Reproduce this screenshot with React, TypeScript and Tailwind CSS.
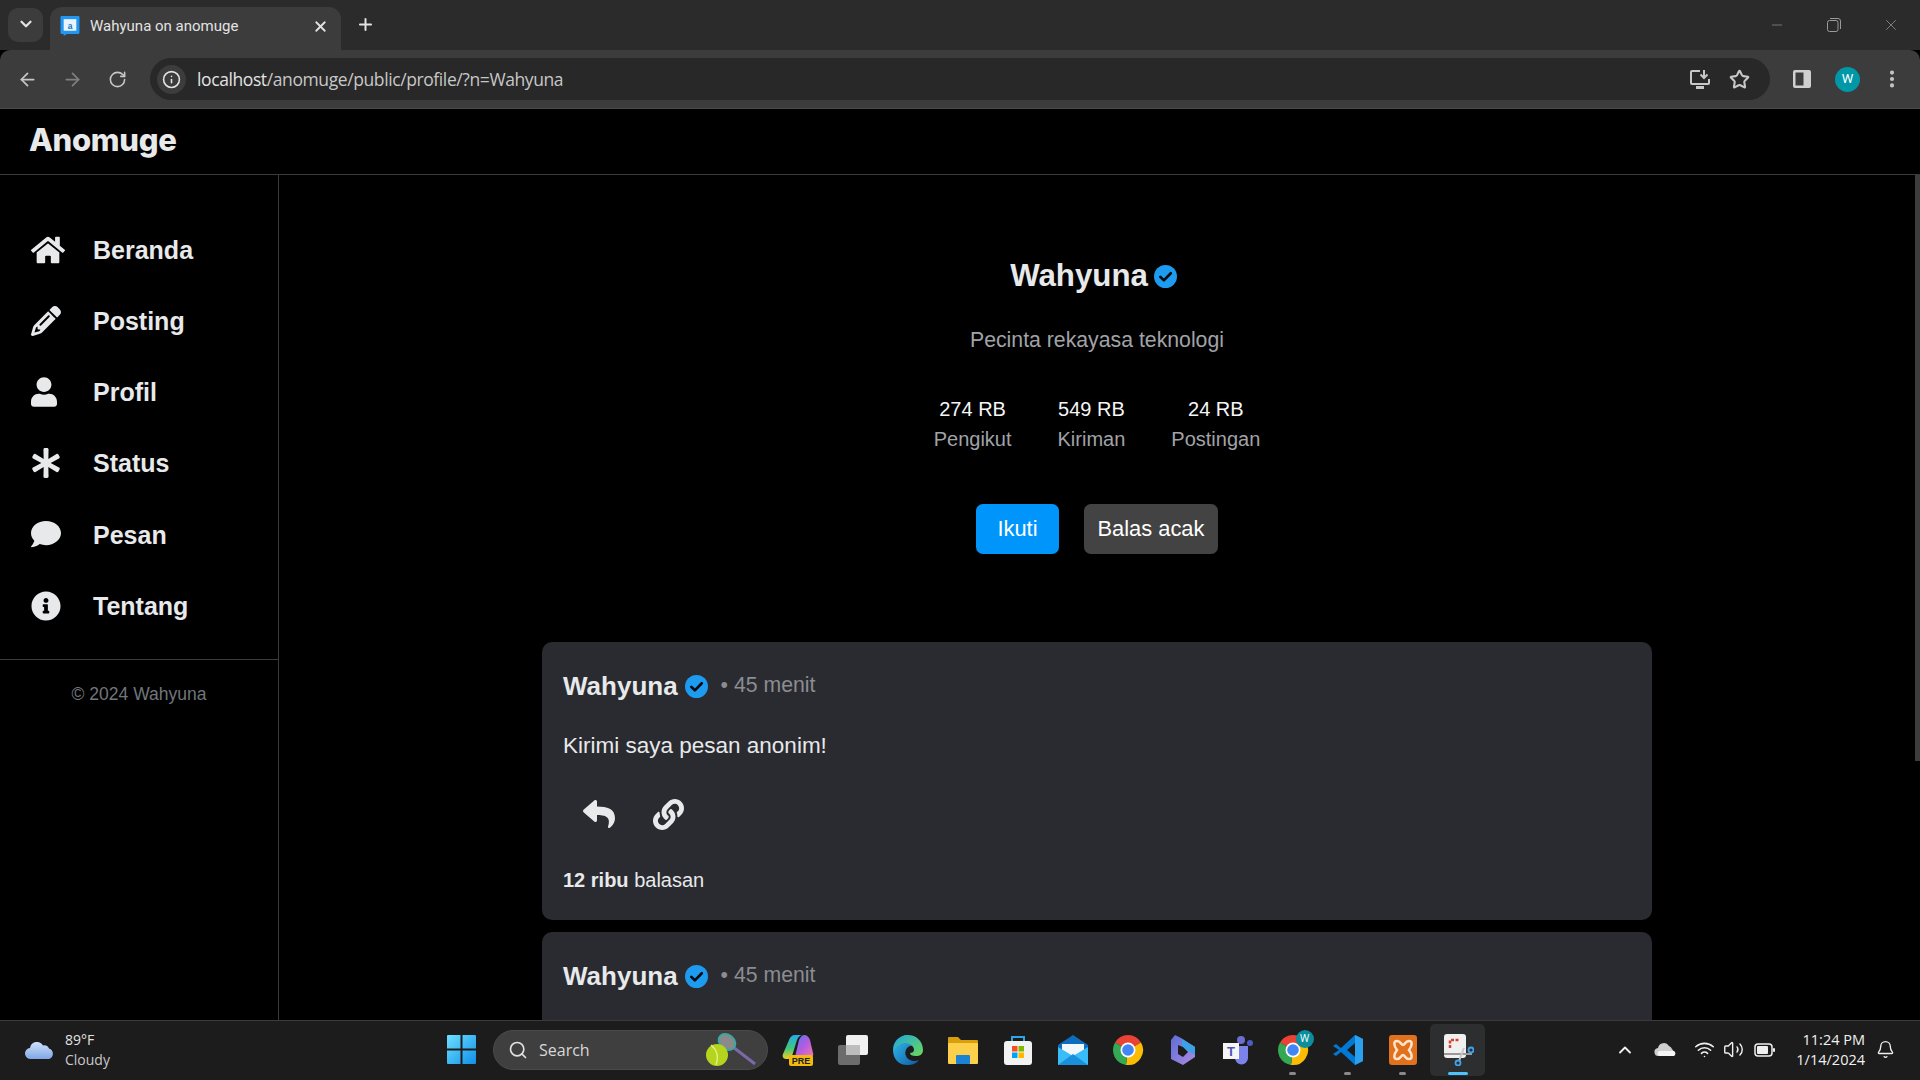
import { FaAsterisk, FaComment, FaHome, FaInfoCircle, FaLink, FaReply, FaUser } from "react-icons/fa";
import { FaPencil } from "react-icons/fa6";
import { ArrowLeft, ArrowRight, ChevronDown, ChevronUp, Plus, RotateCw, Search, Star, Volume2, Wifi, X, Minus, Bell, EllipsisVertical, Info } from "lucide-react";
import type { ReactNode } from "react";

const SANS = "font-['Liberation_Sans',Arial,sans-serif]";

const NAV = [
  { label: "Beranda", icon: <FaHome className="w-[34px] h-[34px]" /> },
  { label: "Posting", icon: <FaPencil className="w-[30px] h-[30px]" /> },
  { label: "Profil", icon: <FaUser className="w-[26px] h-[30px]" /> },
  { label: "Status", icon: <FaAsterisk className="w-[30px] h-[30px]" /> },
  { label: "Pesan", icon: <FaComment className="w-[30px] h-[30px]" /> },
  { label: "Tentang", icon: <FaInfoCircle className="w-[30px] h-[30px]" /> },
];

const STATS = [
  { value: "274 RB", label: "Pengikut" },
  { value: "549 RB", label: "Kiriman" },
  { value: "24 RB", label: "Postingan" },
];

function Verified({ size }: { size: string }) {
  return (
    <svg viewBox="0 0 24 24" className={size}>
      <circle cx="12" cy="12" r="12" fill="#1d9bf0" />
      <path d="M6.6 12.4l3.7 3.6 7.2-7.4" fill="none" stroke="#0b0b0f" strokeWidth="2.8" strokeLinecap="round" strokeLinejoin="round" />
    </svg>
  );
}

function Post({ full }: { full: boolean }) {
  return (
    <div className={`w-[1110px] shrink-0 rounded-[10px] bg-[#2a2b30] px-[21px] pt-[24px] ${full ? "h-[278px]" : "h-[200px]"}`}>
      <div className="flex items-center h-[40px]">
        <span className="text-[26px] font-bold text-[#e7e9ea]">Wahyuna</span>
        <Verified size="w-[23px] h-[23px] ml-[7px]" />
        <span className="ml-[13px] text-[21.250px] text-[#8b8d91]">• 45 menit</span>
      </div>
      {full && (
        <>
          <p className="mt-[22px] text-[22.500px] leading-[36px] text-[#e7e9ea]">Kirimi saya pesan anonim!</p>
          <div className="mt-[34px] flex items-center h-[32px] text-[#e7e9ea] pl-[20px]">
            <FaReply className="w-[32px] h-[32px]" />
            <FaLink className="ml-[38px] w-[31px] h-[31px]" />
          </div>
          <p className="mt-[35px] text-[20px] leading-[30px] text-[#e7e9ea]">
            <b>12 ribu</b> balasan
          </p>
        </>
      )}
    </div>
  );
}

function TabStrip() {
  return (
    <div className="h-[50px] bg-[#2b2b2b] flex items-end text-[#e3e3e3]">
      <div className="ml-[8px] mb-[8px] w-[35px] h-[34px] rounded-[10px] bg-[#3c3c3c] flex items-center justify-center">
        <ChevronDown className="w-[18px] h-[18px] -translate-y-px" strokeWidth={3} />
      </div>
      <div className="ml-[7px] w-[291px] h-[43px] rounded-t-[12px] bg-[#3c3c3c] flex items-center pl-[10px] pr-[12px] pb-[5px]">
        <svg viewBox="1 1 18 19" className="w-[20px] h-[20px] shrink-0">
          <path d="M2 1h16a1 1 0 0 1 1 1v15a1 1 0 0 1-1 1H7l-3 2v-2H2a1 1 0 0 1-1-1V2a1 1 0 0 1 1-1z" fill="#2196f3" />
          <rect x="4" y="4" width="12" height="11" fill="#e8f4ff" />
          <text x="10" y="13" textAnchor="middle" fontSize="8" fontFamily="Liberation Sans" fill="#1a6fc0" fontWeight="700">a</text>
        </svg>
        <span className="ml-[10px] flex-1 text-[15px] font-['Roboto',sans-serif] text-[#e3e3e3]">Wahyuna on anomuge</span>
        <X className="w-[17px] h-[17px]" strokeWidth={2.5} />
      </div>
      <Plus className="ml-[15px] mb-[16px] w-[19px] h-[19px]" strokeWidth={2.5} />
      <div className="flex-1" />
      <div className="flex items-center h-[50px] text-[#9a9a9a]">
        <Minus className="w-[16px] h-[16px] -translate-x-px" strokeWidth={1} />
        <svg viewBox="0 0 14 14" className="ml-[41px] w-[14px] h-[14px]" fill="none" stroke="currentColor">
          <rect x="0.5" y="2.5" width="10.5" height="11" rx="2" />
          <path d="M3 .5h8a2.5 2.5 0 0 1 2.5 2.5v8" />
        </svg>
        <X className="ml-[41px] mr-[20px] w-[18px] h-[18px]" strokeWidth={1} />
      </div>
    </div>
  );
}

function Toolbar() {
  return (
    <div className="h-[59px] bg-[#3c3c3c] rounded-t-[10px] border-b border-[#4a4a4a] flex items-center text-[#c7c7c7]">
      <ArrowLeft className="ml-[17px] w-[21px] h-[21px]" strokeWidth={2} />
      <ArrowRight className="ml-[24px] w-[21px] h-[21px] text-[#808080]" strokeWidth={2} />
      <RotateCw className="ml-[25px] w-[19px] h-[19px]" strokeWidth={2} />
      <div className="ml-[23px] w-[1620px] h-[42px] rounded-full bg-[#282828] flex items-center pl-[7px] pr-[20px]">
        <div className="w-[29px] h-[29px] rounded-full bg-[#3c3c3c] flex items-center justify-center">
          <Info className="w-[19px] h-[19px] text-[#e3e3e3]" strokeWidth={2} />
        </div>
        <div className="ml-[11px] flex-1 text-[17.500px] font-['Open_Sans',sans-serif] tracking-[-0.4px] text-[#c7c7c7]">
          <span className="text-[#e3e3e3]">localhost</span>/anomuge/public/profile/?n=Wahyuna
        </div>
        <svg viewBox="0 0 22 22" className="w-[22px] h-[22px]" fill="none" stroke="#c7c7c7" strokeWidth="2">
          <path d="M11 3H3a1 1 0 0 0-1 1v11a1 1 0 0 0 1 1h16a1 1 0 0 0 1-1v-4" />
          <path d="M7 19.5h8" strokeWidth="3" />
          <path d="M15 2v8m-3.500-3.500L15 10l3.500-3.500" />
        </svg>
        <Star className="ml-[18px] w-[21px] h-[21px]" strokeWidth={2.4} />
      </div>
      <svg viewBox="0 0 18 18" className="ml-[23px] w-[18px] h-[18px]">
        <rect x="0" y="0" width="18" height="18" rx="2" fill="#d0d0d0" />
        <rect x="2.500" y="2.500" width="8" height="13" fill="#3c3c3c" />
      </svg>
      <div className="ml-[24px] w-[25px] h-[25px] rounded-full bg-[#0097a7] flex items-center justify-center text-white text-[13px] font-['Roboto',sans-serif]">W</div>
      <EllipsisVertical className="ml-[21px] w-[22px] h-[22px]" strokeWidth={2.5} />
    </div>
  );
}

function AppIcon({ children, dot, active }: { children: ReactNode; dot?: boolean; active?: boolean }) {
  return (
    <div className={`relative w-[55px] h-[52px] flex items-center justify-center rounded-[5px] ${active ? "bg-[#2d2e2f]" : ""}`}>
      {children}
      {dot && <div className="absolute bottom-[1px] w-[7px] h-[3px] rounded-full bg-[#8a8a8a]" />}
      {active && <div className="absolute bottom-[1px] w-[20px] h-[3px] rounded-full bg-[#4cc2ff]" />}
    </div>
  );
}

const box = "w-[32px] h-[32px]";

function ChromeIcon({ badge }: { badge?: boolean }) {
  return (
    <div className="relative">
      <svg viewBox="0 0 32 32" className={box}>
        <path d="M16 16L3 8.500A15 15 0 0 1 29 8.500z" fill="#ea4335" />
        <path d="M16 16L29 8.500A15 15 0 0 1 14 30.900z" fill="#fbbc04" />
        <path d="M16 16L14 30.900A15 15 0 0 1 3 8.500z" fill="#34a853" />
        <circle cx="16" cy="16" r="7.500" fill="#fff" />
        <circle cx="16" cy="16" r="5.800" fill="#4285f4" />
      </svg>
      {badge && (
        <div className="absolute -top-[4px] -right-[5px] w-[18px] h-[18px] rounded-full bg-[#0a8f9c] text-white text-[10px] flex items-center justify-center">W</div>
      )}
    </div>
  );
}

function Taskbar() {
  return (
    <div className="h-[60px] shrink-0 bg-[#1c1c1c] border-t border-[#3b3b3b] flex items-center pb-[2px] text-[#e3e3e3] font-['Open_Sans',sans-serif]">
      <div className="w-[447px] flex items-center pl-[25px]">
        <svg viewBox="0 0 30 20" className="w-[30px] h-[20px]">
          <defs>
            <linearGradient id="cloud" x1="0" y1="0" x2="0" y2="1">
              <stop offset="0" stopColor="#cfe0fb" />
              <stop offset="1" stopColor="#7fa8e4" />
            </linearGradient>
          </defs>
          <path d="M6 19a5.500 5.500 0 0 1-1-11 7 7 0 0 1 13-2.500 5.500 5.500 0 0 1 6 3A5.500 5.500 0 0 1 24 19z" fill="url(#cloud)" />
        </svg>
        <div className="ml-[10px] text-[14px] leading-[20px]">
          <div>89°F</div>
          <div className="text-[#c9c9c9]">Cloudy</div>
        </div>
      </div>
      <svg viewBox="0 0 29 29" className="w-[29px] h-[29px]">
        <defs>
          <linearGradient id="win" x1="0" y1="0" x2="1" y2="1">
            <stop offset="0" stopColor="#6fe0ff" />
            <stop offset="1" stopColor="#0f8fe8" />
          </linearGradient>
        </defs>
        <path d="M0 1a1 1 0 0 1 1-1h12.500v13.500H0zM15.500 0H28a1 1 0 0 1 1 1v12.500H15.500zM0 15.500h13.500V29H1a1 1 0 0 1-1-1zM15.500 15.500H29V28a1 1 0 0 1-1 1H15.500z" fill="url(#win)" />
      </svg>
      <div className="ml-[17px] w-[275px] h-[40px] rounded-full bg-[#3f3f3f] border border-[#4a4a4a] flex items-center pl-[14px] pr-[10px]">
        <Search className="w-[20px] h-[20px] text-[#e0e0e0]" strokeWidth={2} />
        <span className="ml-[11px] flex-1 text-[16px] text-[#d8d8d8]">Search</span>
        <svg viewBox="0 0 52 34" className="w-[52px] h-[34px]">
          <path d="M28 14l22 17" stroke="#7b6aa8" strokeWidth="3" />
          <ellipse cx="22" cy="9" rx="9" ry="7" transform="rotate(40 22 9)" fill="#8a8a8a" stroke="#3fa7a0" strokeWidth="2" />
          <circle cx="12" cy="22" r="11" fill="#b5d41e" />
          <path d="M6 12c6 5 8 12 5 20" fill="none" stroke="#e8f08a" strokeWidth="1.200" />
        </svg>
      </div>
      <div className="ml-[2px] flex items-center">
        <AppIcon>
          <svg viewBox="0 0 32 32" className={box}>
            <defs>
              <linearGradient id="copA" x1="0" y1="0" x2="0" y2="1">
                <stop offset="0" stopColor="#28a8ea" />
                <stop offset="0.55" stopColor="#3fc77f" />
                <stop offset="1" stopColor="#f2d022" />
              </linearGradient>
              <linearGradient id="copB" x1="0" y1="0" x2="1" y2="1">
                <stop offset="0" stopColor="#4a7df0" />
                <stop offset="0.5" stopColor="#b45be0" />
                <stop offset="1" stopColor="#f07ab0" />
              </linearGradient>
            </defs>
            <path d="M7 6c1-3 3-5 6-5h8c-3 0-5 2-6 5l-5 16c-1 2-2 3-4 3H4c-3 0-4-3-3-5z" fill="url(#copA)" />
            <path d="M17 6c1-2 3-5 5-5 3 0 5 2 6 5l3 13c1 3-1 4-3 4H13z" fill="url(#copB)" />
            <rect x="7" y="21" width="24" height="11" rx="2" fill="#f2b90f" />
            <text x="19" y="30" textAnchor="middle" fontSize="9" fontWeight="700" fontFamily="Liberation Sans" fill="#1c1c1c">PRE</text>
          </svg>
        </AppIcon>
        <AppIcon>
          <svg viewBox="0 0 32 32" className={box}>
            <rect x="9" y="1" width="22" height="20" rx="2" fill="#f0f0f0" />
            <rect x="1" y="11" width="22" height="20" rx="2" fill="#6c6c6c" />
            <rect x="9" y="11" width="14" height="10" fill="#bdbdbd" />
          </svg>
        </AppIcon>
        <AppIcon>
          <svg viewBox="0 0 32 32" className={box}>
            <defs>
              <linearGradient id="edge" x1="0" y1="0" x2="1" y2="1">
                <stop offset="0" stopColor="#35c1f1" />
                <stop offset="1" stopColor="#0c59a4" />
              </linearGradient>
              <linearGradient id="edgeG" x1="0" y1="0" x2="1" y2="1">
                <stop offset="0" stopColor="#1fa8d8" />
                <stop offset="1" stopColor="#6ed85a" />
              </linearGradient>
            </defs>
            <path d="M16 1C7 1 1 8 1 16c0 9 6 15 14 15 5 0 9-1 12-5-4 2-11 1-13-4-2-5 1-9 4-10 4-1 7 1 8 4z" fill="url(#edge)" />
            <path d="M16 1c8 0 15 6 15 15 0 5-4 6-7 6-4 0-6-1-6-3 2 0 4-1 4-3 0-3-3-7-9-7-4 0-9 3-11 8C3 8 8 1 16 1z" fill="url(#edgeG)" />
          </svg>
        </AppIcon>
        <AppIcon>
          <svg viewBox="0 0 32 32" className={box}>
            <path d="M1 4a1 1 0 0 1 1-1h9l3 3h16a1 1 0 0 1 1 1v4H1z" fill="#d99e0b" />
            <rect x="1" y="9" width="30" height="21" rx="1" fill="#fcd04a" />
            <rect x="9" y="21" width="14" height="9" rx="1" fill="#1b83d4" />
          </svg>
        </AppIcon>
        <AppIcon>
          <svg viewBox="0 0 32 32" className={box}>
            <path d="M10 8V3h12v5" fill="none" stroke="#2aa5e8" strokeWidth="2" />
            <rect x="2" y="7" width="28" height="24" rx="3" fill="#f2f2f2" />
            <rect x="10" y="12" width="5.500" height="5.500" fill="#f25022" />
            <rect x="16.500" y="12" width="5.500" height="5.500" fill="#7fba00" />
            <rect x="10" y="18.500" width="5.500" height="5.500" fill="#00a4ef" />
            <rect x="16.500" y="18.500" width="5.500" height="5.500" fill="#ffb900" />
          </svg>
        </AppIcon>
        <AppIcon>
          <svg viewBox="0 0 32 32" className={box}>
            <path d="M1 11L16 1l15 10v20H1z" fill="#0f6cbd" />
            <path d="M5 10h22v8l-11 6-11-6z" fill="#f2f7fb" />
            <path d="M1 13l15 9 15-9v18H1z" fill="#38bdf8" />
            <path d="M1 31l15-11 15 11z" fill="#1a8fdc" />
          </svg>
        </AppIcon>
        <AppIcon><ChromeIcon /></AppIcon>
        <AppIcon>
          <svg viewBox="0 0 32 32" className={box}>
            <defs>
              <linearGradient id="bingA" x1="0" y1="0" x2="1" y2="1">
                <stop offset="0" stopColor="#5a6ed8" />
                <stop offset="1" stopColor="#b08ae0" />
              </linearGradient>
            </defs>
            <path d="M8 1l6 3 14 9v10l-12 8-12-6V6z" fill="url(#bingA)" />
            <path d="M15 5l13 8v8l-8-5-5-2z" fill="#3aa2e6" />
            <path d="M11 11l5 2 5 5-5 5-5-3z" fill="#1c1c1c" />
          </svg>
        </AppIcon>
        <AppIcon>
          <svg viewBox="0 0 32 32" className={box}>
            <circle cx="19" cy="6" r="4" fill="#6a6fd0" />
            <circle cx="28" cy="9" r="3" fill="#5059c9" />
            <path d="M13 12h13v12a6 6 0 0 1-13 0z" fill="#7b83eb" />
            <rect x="1" y="9" width="16" height="16" fill="#f5f5f5" />
            <text x="9" y="22" textAnchor="middle" fontSize="13" fontWeight="700" fontFamily="Liberation Sans" fill="#4b53bc">T</text>
          </svg>
        </AppIcon>
        <AppIcon dot><ChromeIcon badge /></AppIcon>
        <AppIcon dot>
          <svg viewBox="0 0 32 32" className={box}>
            <path d="M23 1l8 4v22l-8 4L9 18l-5 4-3-2 6-4-6-4 3-2 5 4z" fill="#0078d4" />
            <path d="M23 1v30l8-4V5z" fill="#2aa0ee" />
            <path d="M23 9l-8 7 8 7z" fill="#1c1c1c" />
          </svg>
        </AppIcon>
        <AppIcon dot>
          <svg viewBox="0 0 32 32" className={box}>
            <rect x="2" y="1" width="28" height="30" rx="3" fill="#e2711d" />
            <path d="M10 7c4 0 4 4 6 4s2-4 6-4 3 5 0 9c3 4 4 9 0 9s-4-4-6-4-2 4-6 4-3-5 0-9c-3-4-4-9 0-9z" fill="none" stroke="#ffe7cf" strokeWidth="2.500" />
          </svg>
        </AppIcon>
        <AppIcon active>
          <svg viewBox="0 0 32 32" className={box}>
            <rect x="2" y="0" width="22" height="24" rx="3" fill="#f0f0f0" />
            <path d="M8 14V6h9" fill="none" stroke="#d9412b" strokeWidth="2.500" strokeDasharray="3 1.500" />
            <path d="M2 20h28" stroke="#9a9a9a" strokeWidth="2" />
            <path d="M22 14l-5 13" stroke="#c8c8c8" strokeWidth="2" />
            <circle cx="16" cy="29" r="2.500" fill="none" stroke="#3fa2ea" strokeWidth="1.800" />
            <circle cx="29" cy="16" r="2.500" fill="none" stroke="#3fa2ea" strokeWidth="1.800" />
          </svg>
        </AppIcon>
      </div>
      <div className="flex-1" />
      <div className="flex items-center text-[#f0f0f0]">
        <ChevronUp className="w-[20px] h-[20px]" strokeWidth={2.2} />
        <svg viewBox="0 0 22 14" className="ml-[19px] w-[22px] h-[14px]">
          <path d="M5 13a4 4 0 0 1-1-8 6 6 0 0 1 11-2 5 5 0 0 1 3 3 4 4 0 0 1-1 7z" fill="#cfcfcf" />
          <path d="M5 13a3 3 0 0 1 0-5h15a3 3 0 0 1 0 5z" fill="#f5f5f5" />
        </svg>
        <Wifi className="ml-[18px] w-[21px] h-[21px]" strokeWidth={1.8} />
        <Volume2 className="ml-[8px] w-[21px] h-[21px]" strokeWidth={1.6} />
        <svg viewBox="0 0 21 14" className="ml-[10px] w-[21px] h-[14px]">
          <rect x="1" y="1" width="17" height="12" rx="3" fill="none" stroke="#f0f0f0" strokeWidth="1.500" />
          <rect x="3" y="3" width="11" height="8" rx="1" fill="#f0f0f0" />
          <rect x="19" y="5" width="2" height="4" rx="1" fill="#f0f0f0" />
        </svg>
        <div className="ml-[21px] text-right text-[14.500px] leading-[20px]">
          <div>11:24 PM</div>
          <div>1/14/2024</div>
        </div>
        <Bell className="ml-[11px] mr-[25px] w-[19px] h-[19px]" strokeWidth={1.7} />
      </div>
    </div>
  );
}

export default function App() {
  return (
    <div className={`w-screen h-screen overflow-hidden flex flex-col bg-black ${SANS}`}>
      <TabStrip />
      <Toolbar />
      <header className="h-[66px] shrink-0 border-b border-[#3a3a3a] pl-[29px] flex items-center">
        <h1 className="text-[31px] font-extrabold font-['Inter',sans-serif] tracking-[-0.3px] -translate-y-px text-[#e7e9ea]">Anomuge</h1>
      </header>
      <div className="flex-1 min-h-0 flex">
        <aside className="w-[279px] shrink-0 border-r border-[#3a3a3a]">
          <nav className="pt-[40px] pb-[17px] border-b border-[#3a3a3a]">
            {NAV.map((item) => (
              <div key={item.label} className="h-[71.200px] flex items-center pl-[31px] text-[#e7e9ea]">
                <div className="w-[62px] flex items-center -translate-y-px">{item.icon}</div>
                <span className="text-[25px] font-bold">{item.label}</span>
              </div>
            ))}
          </nav>
          <p className="mt-[21px] text-center text-[17.500px] text-[#71767b]">© 2024 Wahyuna</p>
        </aside>
        <main className="flex-1 min-w-0 flex flex-col items-center overflow-hidden">
          <div className="pt-[81px] flex items-center h-[121px] pr-[7px]">
            <h2 className="text-[31.250px] font-bold text-[#e7e9ea]">Wahyuna</h2>
            <Verified size="w-[23px] h-[23px] ml-[6px]" />
          </div>
          <p className="mt-[30px] text-[21.250px] leading-[28px] text-[#a0a3a7]">Pecinta rekayasa teknologi</p>
          <div className="mt-[40px] flex gap-[46px] text-[20px] leading-[30px] text-center">
            {STATS.map((s) => (
              <div key={s.label}>
                <div className="text-[#f5f5f5]">{s.value}</div>
                <div className="text-[#a0a3a7]">{s.label}</div>
              </div>
            ))}
          </div>
          <div className="mt-[50px] flex gap-[25px] text-[21.875px] text-white">
            <button className="w-[83px] h-[50px] rounded-[7px] bg-[#0095fb]">Ikuti</button>
            <button className="w-[134px] h-[50px] rounded-[7px] bg-[#434343]">Balas acak</button>
          </div>
          <div className="mt-[88px] flex flex-col gap-[12px]">
            <Post full />
            <Post full={false} />
          </div>
        </main>
        <div className="w-[5px] shrink-0">
          <div className="h-[586px] bg-[#3d3d3d]" />
        </div>
      </div>
      <Taskbar />
    </div>
  );
}
